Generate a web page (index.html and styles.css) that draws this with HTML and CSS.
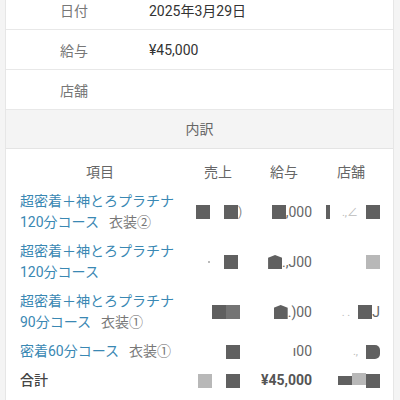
FILE: index.html
```html
<!DOCTYPE html>
<html lang="ja">
<head>
<meta charset="utf-8">
<link rel="stylesheet" href="styles.css">
</head>
<body>
<div class="card">
  <div class="info-row"><span class="label">日付</span><span class="value">2025年3月29日</span></div>
  <div class="info-row"><span class="label">給与</span><span class="value">¥45,000</span></div>
  <div class="info-row"><span class="label">店舗</span><span class="value"></span></div>
  <div class="section-head">内訳</div>
  <div class="table">
    <div class="th item-col">項目</div>
    <div class="th sales-col">売上</div>
    <div class="th pay-col">給与</div>
    <div class="th store-col">店舗</div>

    <div class="td item-col"><span class="item">超密着＋神とろプラチナ<br>120分コース</span><span class="opt">衣装②</span></div>
    <div class="td sales-col"><span class="blk"></span><span class="blk gap"></span><span class="frag">)</span></div>
    <div class="td pay-col"><span class="blk"></span><span class="num">,000</span></div>
    <div class="td store-col"><span class="blk thin"></span><span class="faint">.,∠</span><span class="blk"></span></div>

    <div class="td item-col"><span class="item">超密着＋神とろプラチナ<br>120分コース</span></div>
    <div class="td sales-col"><span class="dot"></span><span class="blk gap"></span><span class="frag"> </span></div>
    <div class="td pay-col"><span class="blk notch"></span><span class="num">.,J00</span></div>
    <div class="td store-col"><span class="blk light"></span></div>

    <div class="td item-col"><span class="item">超密着＋神とろプラチナ<br>90分コース</span><span class="opt">衣装①</span></div>
    <div class="td sales-col"><span class="blk wide"></span></div>
    <div class="td pay-col"><span class="blk notch"></span><span class="num">.)00</span></div>
    <div class="td store-col"><span class="faint">. .</span><span class="blk"></span><span class="num">J</span></div>

    <div class="td item-col"><span class="item">密着60分コース</span><span class="opt">衣装①</span></div>
    <div class="td sales-col"><span class="blk"></span></div>
    <div class="td pay-col"><span class="num">ı00</span></div>
    <div class="td store-col"><span class="faint">.,</span><span class="blk round"></span></div>

    <div class="td item-col total-label">合計</div>
    <div class="td sales-col"><span class="blk light"></span><span class="blk gap"></span></div>
    <div class="td pay-col total-num">¥45,000</div>
    <div class="td store-col"><span class="blk low"></span><span class="blk light mid"></span><span class="blk"></span></div>
  </div>
</div>
</body>
</html>
```
FILE: styles.css
```css
html, body {
  margin: 0;
  padding: 0;
  background: #f4f4f4;
  height: 400px;
  overflow: hidden;
}
body {
  font-family: Roboto, "Noto Sans CJK JP", sans-serif;
  font-size: 14px;
  color: #333;
}
.card {
  margin: -10px 6px 0 5px;
  background: #fff;
  border-left: 1px solid #e6e6e6;
  border-right: 1px solid #e6e6e6;
  height: 410px;
}
.info-row {
  height: 39px;
  border-bottom: 1px solid #e8e8e8;
  display: flex;
  align-items: center;
}
.label {
  width: 89px;
  padding-left: 54px;
  color: #777;
}
.value {
  color: #333;
}
.section-head {
  height: 38px;
  line-height: 38px;
  background: #f4f4f4;
  border-bottom: 1px solid #e4e4e4;
  text-align: center;
  color: #666;
}
.table {
  display: grid;
  grid-template-columns: 160px 60px 72px 68px;
  padding: 9px 0 0 14px;
  line-height: 21px;
}
.th, .td {
  padding: 4px 0;
  display: flex;
  align-items: center;
}
.th {
  color: #666;
  justify-content: center;
}
.td {
  justify-content: flex-end;
  color: #666;
}
.td.item-col {
  display: block;
}
.sales-col { padding-left: 16px; }
.pay-col { padding-left: 16px; }
.store-col { padding-left: 10px; }
.item {
  color: #3a88b3;
}
.opt {
  color: #777;
  margin-left: 10px;
}
.total-label {
  color: #444;
  font-weight: 500;
}
.total-num {
  font-weight: 700;
  color: #555;
}
.blk {
  display: inline-block;
  width: 14px;
  height: 14px;
  background: #606060;
}
.blk.gap { margin-left: 14px; }
.blk.wide {
  width: 28px;
  background: linear-gradient(90deg, #5f5f5f 50%, #747474 50%);
}
.blk.light { background: #b8b8b8; }
.blk.thin { width: 4px; margin-right: 4px; }
.blk.notch { clip-path: polygon(0 20%, 50% 0, 100% 20%, 100% 100%, 0 100%); }
.blk.round { border-radius: 0 5px 5px 0; }
.blk.low { height: 9px; align-self: flex-end; margin-bottom: 6px; }
.blk.mid { height: 12px; align-self: flex-end; margin-bottom: 6px; }
.frag {
  color: #888;
  font-size: 12px;
  width: 2px;
}
.dot {
  display: inline-block;
  width: 2px;
  height: 2px;
  background: #bbb;
}
.num {
  color: #666;
}
.faint {
  color: #bbb;
  font-size: 11px;
  margin: 0 8px;
}
```
